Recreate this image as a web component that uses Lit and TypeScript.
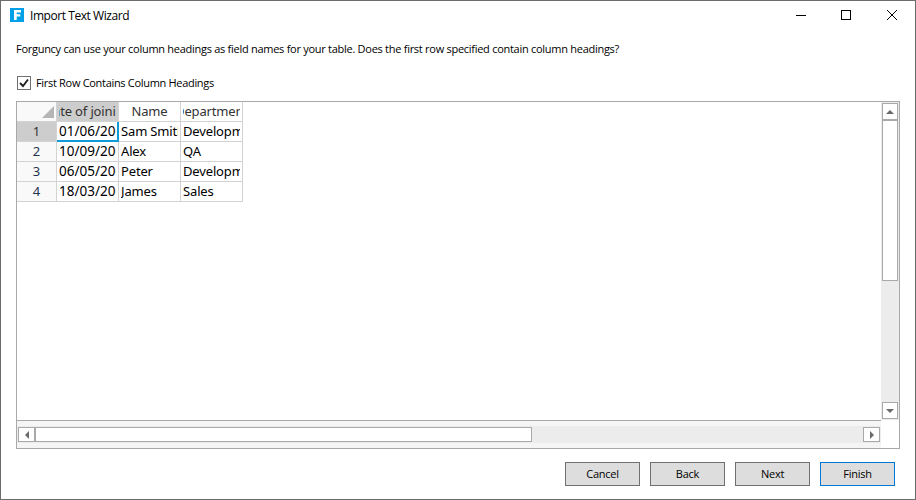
import { LitElement, html, css, svg } from "lit";
import { customElement } from "lit/decorators.js";
import { classMap } from "lit/directives/class-map.js";

const HEADINGS = ["Date of joining", "Name", "Department"];
const ROWS = [
  ["01/06/2009", "Sam Smith", "Development"],
  ["10/09/2008", "Alex", "QA"],
  ["06/05/2007", "Peter", "Development"],
  ["18/03/2009", "James", "Sales"],
];

@customElement("text-grid")
class TextGrid extends LitElement {
  static styles = css`
    :host { display: block; }
    .sheet {
      display: grid;
      grid-template-columns: 40px 62px 62px 62px;
      grid-template-rows: 20px;
      grid-auto-rows: 20px;
      width: 226px;
      font: 13px/19px "Noto Sans", sans-serif;
      color: #000;
    }
    .cell {
      box-sizing: border-box;
      border-right: 1px solid #d3d3d3;
      border-bottom: 1px solid #d3d3d3;
      padding: 0 2px;
      overflow: hidden;
      white-space: nowrap;
      position: relative;
      letter-spacing: -0.15px;
    }
    .date { font-size: 13.5px; letter-spacing: 0; }
    .text { display: block; overflow: hidden; height: 19px; }
    .head { color: #333; }
    .head .text { display: flex; justify-content: center; }
    .row-head { background: #f9f9f9; color: #1f3350; text-align: center; }
    .picked { background: #cdcdcd; color: #333; }
    .corner { background: #f9f9f9; display: flex; justify-content: flex-end; padding: 4px 2px 0 0; }
    .corner svg { display: block; }
    .active::after {
      content: "";
      position: absolute;
      inset: 0 -1px -1px 0;
      border: solid #0e9bd8;
      border-width: 0 2px 2px 0;
    }
    .active { overflow: visible; }
  `;
  render() {
    return html`<div class="sheet">
      <div class="cell corner"><svg width="12" height="12"><path d="M12 0V12H0Z" fill="#b5b5b5" /></svg></div>
      ${HEADINGS.map((h, i) => html`<div class=${classMap({ cell: true, head: true, picked: i === 0 })}><span class="text"><span>${h}</span></span></div>`)}
      ${ROWS.map((row, r) => html`
        <div class=${classMap({ cell: true, "row-head": true, picked: r === 0 })}>${r + 1}</div>
        ${row.map((v, c) => html`<div class=${classMap({ cell: true, date: c === 0, active: r === 0 && c === 0 })}><span class="text">${v}</span></div>`)}`)}
    </div>`;
  }
}

const ARROWS: Record<string, string> = {
  up: "M0 6 4 2 8 6Z",
  down: "M0 2H8L4 6Z",
  left: "M6 0V8L2 4Z",
  right: "M2 0 6 4 2 8Z",
};
const arrow = (dir: string) => html`<svg width="8" height="8">${svg`<path d=${ARROWS[dir]} fill="#6a6a6a" />`}</svg>`;

@customElement("app-root")
class AppRoot extends LitElement {
  static styles = css`
    :host {
      display: flex;
      flex-direction: column;
      box-sizing: border-box;
      width: 916px;
      height: 500px;
      border: 1px solid #6d6b6c;
      background: #fff;
      font: 11px/16px "Open Sans", sans-serif;
      letter-spacing: -0.275px;
      color: #000;
    }
    svg { display: block; }
    .title-bar { display: flex; height: 30px; align-items: center; padding-left: 9px; }
    .logo { margin-bottom: 2px; }
    .title { font-size: 12px; letter-spacing: -0.44px; margin-left: 6px; flex: 1; }
    .controls { display: flex; gap: 34px; margin-right: 17px; }
    .message { margin: 10px 15px 0; height: 16px; white-space: nowrap; }
    .option { display: flex; align-items: center; margin: 18px 15px 0; height: 16px; gap: 5px; letter-spacing: -0.31px; }
    .check {
      box-sizing: border-box;
      width: 14px;
      height: 14px;
      margin-left: 1px;
      border: 1px solid #707070;
    }
    .preview {
      box-sizing: border-box;
      width: 884px;
      height: 348px;
      margin: 10px 15px 0;
      border: 1px solid #a9a9a9;
      display: grid;
      grid-template-columns: 864px 18px;
      grid-template-rows: 318px 28px;
    }
    .vbar {
      display: flex;
      flex-direction: column;
      background: #ececec;
      padding: 1px;
    }
    .hbar {
      border-top: 1px solid #a9a9a9;
      background: #f5f5f5;
      padding: 5px 0;
    }
    .track { display: flex; height: 17px; box-sizing: border-box; padding: 1px; background: #ececec; }
    .box { box-sizing: border-box; border: 1px solid #a9a9a9; background: #fff; display: grid; place-items: center; }
    .vbar .box { width: 16px; height: 17px; }
    .vbar .thumb { height: 161px; }
    .vbar .end { margin-top: auto; }
    .track .box { width: 17px; height: 15px; }
    .track .thumb { width: 497px; }
    .track .end { margin-left: auto; }
    .actions { display: flex; justify-content: flex-end; gap: 10px; margin: 13px 20px 0 0; }
    button {
      box-sizing: border-box;
      width: 75px;
      height: 24px;
      padding: 0;
      border: 1px solid #707070;
      background: #ddd;
      color: #000;
      font: inherit;
      letter-spacing: -0.25px;
    }
    .primary { border-color: #0078d7; }
  `;
  render() {
    return html`
      <div class="title-bar">
        <svg class="logo" width="14" height="14"><path d="M0 0H14V14H0Z" fill="#00a0e9" /><path d="M4 2H11V4.5H6.7V6.2H10.3V8.5H6.7V12H4Z" fill="#fff" /></svg>
        <span class="title">Import Text Wizard</span>
        <div class="controls">
          <svg width="12" height="12" shape-rendering="crispEdges"><path d="M2 5.5H12" stroke="#000" /></svg>
          <svg width="12" height="12" shape-rendering="crispEdges"><path d="M1.5 0.5H10.5V9.5H1.5Z" stroke="#000" fill="none" /></svg>
          <svg width="12" height="12"><path d="M1 0 11 10M11 0 1 10" stroke="#000" fill="none" /></svg>
        </div>
      </div>
      <div class="message">Forguncy can use your column headings as field names for your table. Does the first row specified contain column headings?</div>
      <label class="option">
        <span class="check"><svg width="12" height="12"><path d="M2 6 5 9 10 2.5" stroke="#222" stroke-width="1.9" fill="none" /></svg></span>
        <span>First Row Contains Column Headings</span>
      </label>
      <div class="preview">
        <text-grid></text-grid>
        <div class="vbar">
          <div class="box">${arrow("up")}</div>
          <div class="box thumb"></div>
          <div class="box end">${arrow("down")}</div>
        </div>
        <div class="hbar"><div class="track">
          <div class="box">${arrow("left")}</div>
          <div class="box thumb"></div>
          <div class="box end">${arrow("right")}</div>
        </div></div>
      </div>
      <div class="actions">
        <button>Cancel</button><button>Back</button><button>Next</button><button class="primary">Finish</button>
      </div>`;
  }
}
